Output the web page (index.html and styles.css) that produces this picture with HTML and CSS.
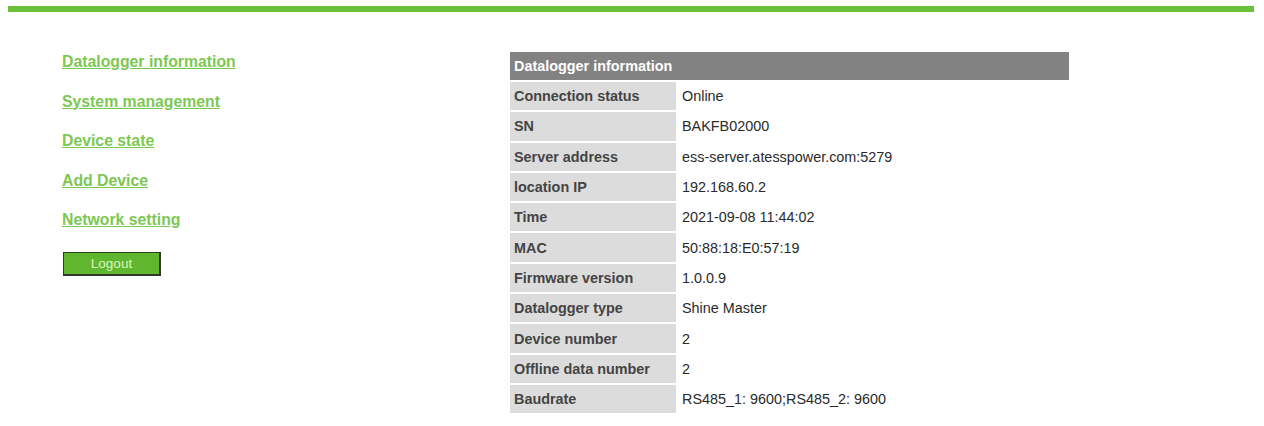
FILE: index.html
```html
<!DOCTYPE html>
<html>
<head>
<meta charset="utf-8">
<link rel="stylesheet" href="styles.css">
</head>
<body>
<div class="topbar"></div>
<div class="content">
  <nav class="nav">
    <a class="nav-link" href="#">Datalogger information</a>
    <a class="nav-link" href="#">System management</a>
    <a class="nav-link" href="#">Device state</a>
    <a class="nav-link" href="#">Add Device</a>
    <a class="nav-link" href="#">Network setting</a>
    <button class="logout">Logout</button>
  </nav>
  <table class="info">
    <thead>
      <tr><th colspan="2">Datalogger information</th></tr>
    </thead>
    <tbody>
      <tr><td class="label">Connection status</td><td class="value">Online</td></tr>
      <tr><td class="label">SN</td><td class="value">BAKFB02000</td></tr>
      <tr><td class="label">Server address</td><td class="value">ess-server.atesspower.com:5279</td></tr>
      <tr><td class="label">location IP</td><td class="value">192.168.60.2</td></tr>
      <tr><td class="label">Time</td><td class="value">2021-09-08 11:44:02</td></tr>
      <tr><td class="label">MAC</td><td class="value">50:88:18:E0:57:19</td></tr>
      <tr><td class="label">Firmware version</td><td class="value">1.0.0.9</td></tr>
      <tr><td class="label">Datalogger type</td><td class="value">Shine Master</td></tr>
      <tr><td class="label">Device number</td><td class="value">2</td></tr>
      <tr><td class="label">Offline data number</td><td class="value">2</td></tr>
      <tr><td class="label">Baudrate</td><td class="value">RS485_1: 9600;RS485_2: 9600</td></tr>
    </tbody>
  </table>
</div>
</body>
</html>
```
FILE: styles.css
```css
html, body {
  margin: 0;
  padding: 0;
  background: #ffffff;
  font-family: "Liberation Sans", Arial, sans-serif;
}

.topbar {
  margin: 6px 10px 0 8px;
  height: 6px;
  background: #6cbf3a;
}

.content {
  display: grid;
  grid-template-columns: 446px 563px;
  padding-left: 62px;
  margin-top: 38px;
}

.nav {
  display: flex;
  flex-direction: column;
  align-items: flex-start;
  padding-top: 3px;
}

.nav-link {
  display: block;
  font-size: 15.8px;
  line-height: 18px;
  font-weight: bold;
  color: #7cc852;
  text-decoration: underline;
  margin-bottom: 21.5px;
}

.logout {
  margin-top: 1px;
  margin-left: 1px;
  width: 98px;
  height: 24px;
  background: #5fb72f;
  color: #d8f5c0;
  border: 1px solid #2f3a2a;
  border-right-width: 2px;
  border-bottom-width: 2px;
  font-family: "Liberation Sans", Arial, sans-serif;
  font-size: 13.5px;
  padding: 0;
}

.info {
  border-collapse: separate;
  border-spacing: 2px;
  width: 563px;
  font-size: 14.4px;
}

.info th {
  background: #828282;
  color: #ffffff;
  text-align: left;
  font-weight: bold;
  height: 28px;
  padding: 0 4px;
}

.info td {
  height: 28.3px;
  padding: 0 4px;
}

.label {
  width: 158px;
  background: #dcdcdc;
  color: #444444;
  font-weight: bold;
}

.value {
  background: #ffffff;
  color: #2a2a2a;
}
```
